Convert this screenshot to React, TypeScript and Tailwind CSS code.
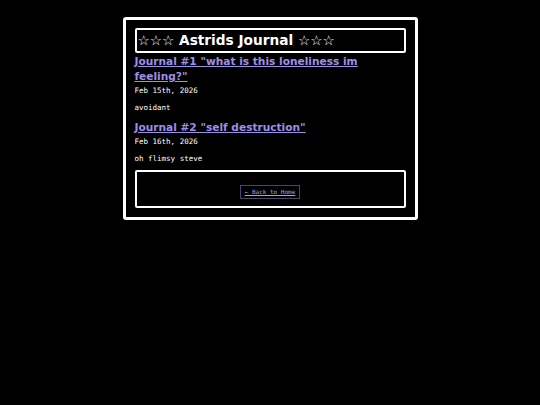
export default function App() {
  const entries = [
    { title: 'Journal #1 "what is this loneliness im feeling?"', date: 'Feb 15th, 2026', body: 'avoidant' },
    { title: 'Journal #2 "self destruction"', date: 'Feb 16th, 2026', body: 'oh flimsy steve' },
  ];

  return (
    <div className="min-h-[405px] bg-black pt-[17px] font-['DejaVu_Sans',sans-serif]">
      <div className="mx-auto w-[295px] rounded-[3px] border-[3px] border-white px-[9px] pt-[8px] pb-[9px]">
        <div className="flex h-[25px] items-center rounded-[2px] border-2 border-white pl-[1px]">
          <h1 className="text-[13.7px] font-bold leading-none text-white">☆☆☆ Astrids Journal ☆☆☆</h1>
        </div>

        {entries.map((e, i) => (
          <div key={i} className={i > 0 ? 'mt-[7px]' : 'mt-[1px]'}>
            <a href="#" className="block text-[10.6px] font-bold leading-[15px] text-[#9d8fe6] underline">
              {e.title}
            </a>
            <div className="mt-[1px] font-['DejaVu_Sans_Mono',monospace] text-[7.5px] leading-[12px] text-white">{e.date}</div>
            <p className="mt-[6px] font-['DejaVu_Sans_Mono',monospace] text-[7.5px] leading-[10px] text-white">{e.body}</p>
          </div>
        ))}

        <div className="mt-[6px] flex justify-center rounded-[2px] border-2 border-white pt-[13px] pb-[7px]">
          <a
            href="#"
            className="border border-[#4b4470] px-[4px] py-[2px] font-['DejaVu_Sans_Mono',monospace] text-[6px] leading-[8px] text-[#a99ee8] underline"
          >
            ← Back to Home
          </a>
        </div>
      </div>
    </div>
  );
}
